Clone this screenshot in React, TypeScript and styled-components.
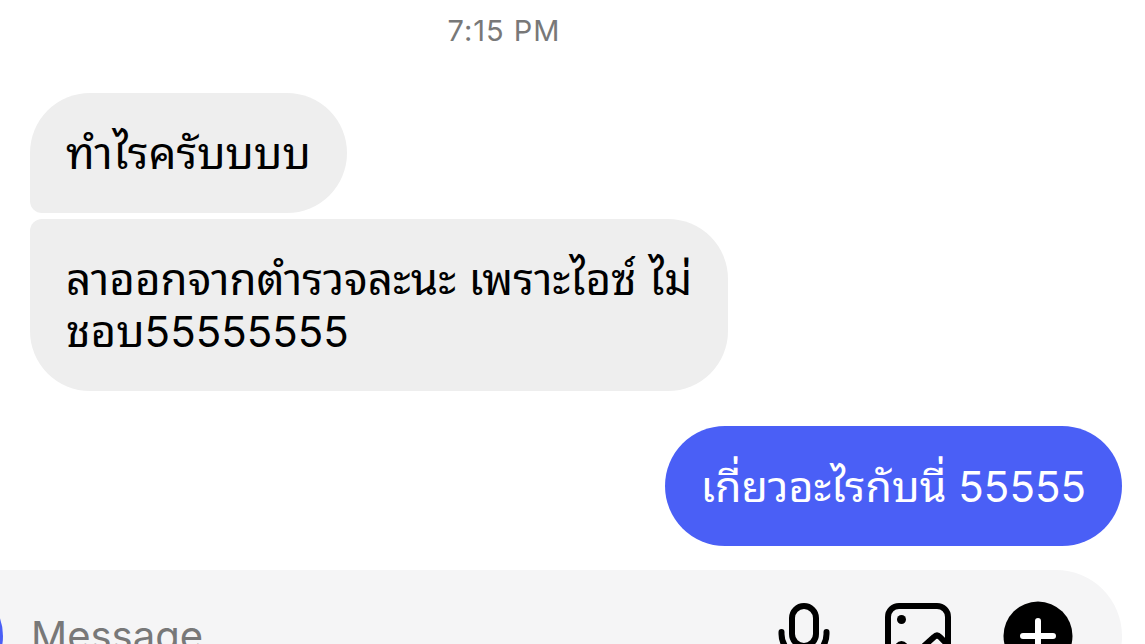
import React from "react";
import styled, { createGlobalStyle } from "styled-components";

const GlobalStyle = createGlobalStyle`
  * { box-sizing: border-box; }
  body {
    margin: 0;
    background: #ffffff;
    color: #000000;
    font-family: Inter, "Noto Sans Thai Looped", "Noto Sans Thai", "Noto Sans", sans-serif;
  }
`;

const Screen = styled.main`
  height: 100vh;
  display: flex;
  flex-direction: column;
  overflow: hidden;
`;

const Thread = styled.section`
  flex: none;
  display: flex;
  flex-direction: column;
  padding: 13px 23px 24px 30px;
`;

const Timestamp = styled.time`
  padding-right: 144px;
  margin-bottom: 44px;
  text-align: center;
  font-size: 29px;
  line-height: 36px;
  letter-spacing: 1px;
  color: #787878;
`;

const Group = styled.div<{ $own?: boolean }>`
  display: flex;
  flex-direction: column;
  align-items: ${(p) => (p.$own ? "flex-end" : "flex-start")};
  gap: 6px;
  & + & { margin-top: 35px; }
`;

const radii = {
  first: "60px 60px 60px 12px",
  last: "12px 60px 60px 60px",
  single: "60px",
};

const Bubble = styled.p<{ $own?: boolean; $place: keyof typeof radii }>`
  margin: 0;
  max-width: 720px;
  padding: 34px 36px;
  border-radius: ${(p) => radii[p.$place]};
  background: ${(p) => (p.$own ? "#4a5ff6" : "#eeeeee")};
  color: ${(p) => (p.$own ? "#ffffff" : "#000000")};
  font-size: ${(p) => (p.$own ? "43px" : "44px")};
  line-height: 52px;
`;

const Digits = styled.span`
  font-size: 42px;
  line-height: 1;
`;

const Composer = styled.form`
  flex: none;
  display: flex;
  align-items: center;
  height: 132px;
  margin-right: 23px;
  padding-right: 49px;
  border-radius: 0 66px 66px 0;
  background: #f5f5f6;
`;

const CameraButton = styled.button`
  flex: none;
  width: 108px;
  height: 108px;
  margin-left: -105px;
  padding: 0;
  border: 0;
  border-radius: 50%;
  background: #4a5ff6;
`;

const MessageInput = styled.input`
  flex: 1;
  min-width: 0;
  margin-left: 28px;
  padding: 0;
  border: 0;
  outline: 0;
  background: transparent;
  font: inherit;
  font-size: 40px;
  line-height: 48px;
  &::placeholder { color: #787878; opacity: 1; }
`;

const Tools = styled.div`
  display: flex;
  gap: 48px;
`;

const ToolButton = styled.button`
  width: 70px;
  height: 70px;
  padding: 0;
  border: 0;
  background: none;
  color: #000000;
  svg { display: block; }
`;

const stroke = {
  fill: "none",
  stroke: "currentColor",
  strokeWidth: 6,
  strokeLinecap: "round" as const,
  strokeLinejoin: "round" as const,
};

const MicIcon = () => (
  <svg width="70" height="70" viewBox="0 0 70 70" {...stroke}>
    <rect x="25" y="5" width="24" height="40" rx="12" />
    <path d="M14.500 31v2a22.500 22.500 0 0 0 45 0v-2M37 56v10M25 66h24" />
  </svg>
);

const PhotoIcon = () => (
  <svg width="70" height="70" viewBox="0 0 70 70" {...stroke}>
    <rect x="3" y="5" width="60" height="60" rx="11" />
    <circle cx="16.500" cy="18.500" r="4.500" fill="currentColor" stroke="none" />
    <path d="M3 55l10-10q3.500-4 7 0l9 9L49 36q3-3 6 0L63 44" />
  </svg>
);

const PlusIcon = () => (
  <svg width="70" height="70" viewBox="0 0 70 70" {...stroke}>
    <circle cx="35" cy="35" r="34.500" fill="currentColor" stroke="none" />
    <path d="M35 20v30M20 35h30" stroke="#ffffff" />
  </svg>
);

export default function App() {
  return (
    <Screen>
      <GlobalStyle />
      <Thread>
        <Timestamp dateTime="19:15">7:15 PM</Timestamp>
        <Group>
          <Bubble $place="first">ทำไรครับบบบ</Bubble>
          <Bubble $place="last">
            ลาออกจากตำรวจละนะ เพราะไอซ์ ไม่
            <br />
            ชอบ<Digits>55555555</Digits>
          </Bubble>
        </Group>
        <Group $own>
          <Bubble $own $place="single">เกี่ยวอะไรกับนี่<Digits> 55555</Digits></Bubble>
        </Group>
      </Thread>
      <Composer>
        <CameraButton type="button" aria-label="Camera" />
        <MessageInput aria-label="Message" placeholder="Message…" />
        <Tools>
          <ToolButton type="button" aria-label="Record voice"><MicIcon /></ToolButton>
          <ToolButton type="button" aria-label="Send photo"><PhotoIcon /></ToolButton>
          <ToolButton type="button" aria-label="More"><PlusIcon /></ToolButton>
        </Tools>
      </Composer>
    </Screen>
  );
}
